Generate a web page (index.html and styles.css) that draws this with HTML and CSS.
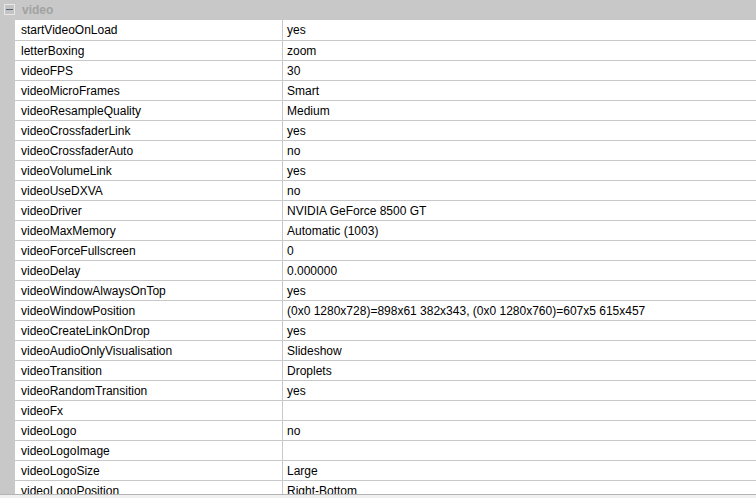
FILE: index.html
```html
<!DOCTYPE html>
<html lang="en">
<head>
    <meta charset="UTF-8">
    <title>Preferences - video</title>
    <link rel="stylesheet" href="styles.css">
</head>
<body>
    <div class="grid-view">
        <div class="category">
            <span class="toggle"><span class="toggle-bar"></span></span>
            <span class="category-name">video</span>
        </div>
        <table class="props">
            <tr><td class="name">startVideoOnLoad</td><td class="value">yes</td></tr>
            <tr><td class="name">letterBoxing</td><td class="value">zoom</td></tr>
            <tr><td class="name">videoFPS</td><td class="value">30</td></tr>
            <tr><td class="name">videoMicroFrames</td><td class="value">Smart</td></tr>
            <tr><td class="name">videoResampleQuality</td><td class="value">Medium</td></tr>
            <tr><td class="name">videoCrossfaderLink</td><td class="value">yes</td></tr>
            <tr><td class="name">videoCrossfaderAuto</td><td class="value">no</td></tr>
            <tr><td class="name">videoVolumeLink</td><td class="value">yes</td></tr>
            <tr><td class="name">videoUseDXVA</td><td class="value">no</td></tr>
            <tr><td class="name">videoDriver</td><td class="value">NVIDIA GeForce 8500 GT</td></tr>
            <tr><td class="name">videoMaxMemory</td><td class="value">Automatic (1003)</td></tr>
            <tr><td class="name">videoForceFullscreen</td><td class="value">0</td></tr>
            <tr><td class="name">videoDelay</td><td class="value">0.000000</td></tr>
            <tr><td class="name">videoWindowAlwaysOnTop</td><td class="value">yes</td></tr>
            <tr><td class="name">videoWindowPosition</td><td class="value">(0x0 1280x728)=898x61 382x343, (0x0 1280x760)=607x5 615x457</td></tr>
            <tr><td class="name">videoCreateLinkOnDrop</td><td class="value">yes</td></tr>
            <tr><td class="name">videoAudioOnlyVisualisation</td><td class="value">Slideshow</td></tr>
            <tr><td class="name">videoTransition</td><td class="value">Droplets</td></tr>
            <tr><td class="name">videoRandomTransition</td><td class="value">yes</td></tr>
            <tr><td class="name">videoFx</td><td class="value"></td></tr>
            <tr><td class="name">videoLogo</td><td class="value">no</td></tr>
            <tr><td class="name">videoLogoImage</td><td class="value"></td></tr>
            <tr><td class="name">videoLogoSize</td><td class="value">Large</td></tr>
            <tr><td class="name">videoLogoPosition</td><td class="value">Right-Bottom</td></tr>
        </table>
    </div>
    <div class="hscroll"></div>
</body>
</html>
```

FILE: styles.css
```css
html, body {
    margin: 0;
    padding: 0;
    background: #fff;
    overflow: hidden;
}
body {
    font-family: "Liberation Sans", Arial, sans-serif;
    font-size: 12px;
    color: #000;
}
.grid-view {
    height: 494px;
    overflow: hidden;
    background: #c8c8c8;
}
.category {
    height: 20px;
    display: flex;
    align-items: center;
    background: #c8c8c8;
}
.toggle {
    width: 9px;
    height: 9px;
    margin: 0 0 1px 4px;
    border: 1px solid #e8e8e8;
    background: #c4c4c4;
    display: flex;
    align-items: center;
    justify-content: center;
}
.toggle-bar {
    width: 7px;
    height: 1px;
    background: #50607a;
}
.category-name {
    margin-left: 7px;
    font-weight: bold;
    color: #a2a2a2;
}
.props {
    border-collapse: collapse;
    margin-left: 15px;
    width: 741px;
    background: #fff;
}
.props td {
    height: 19px;
    padding: 0 0 0 6px;
    border-top: 1px solid #c8c8c8;
    white-space: nowrap;
    vertical-align: middle;
}
.props tr:first-child td {
    border-top: none;
    height: 20px;
}
.props .name {
    width: 261px;
    border-right: 1px solid #c8c8c8;
}
.props .value {
    padding-left: 4px;
}
.hscroll {
    height: 3px;
    border-top: 1px solid #b4b4b4;
    background: #f0f0f0;
}
```
